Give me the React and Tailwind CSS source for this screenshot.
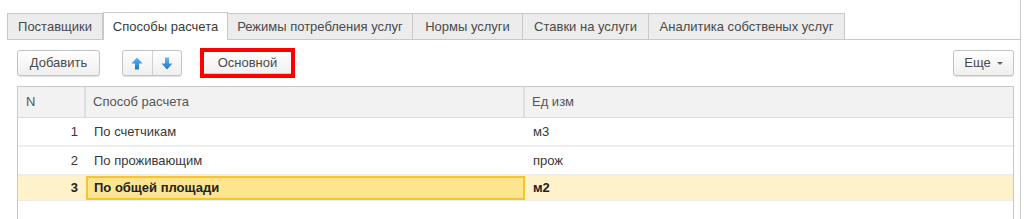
import React from "react"

const tabs = [
  { name: "Поставщики", w: "w-[96px]" },
  { name: "Способы расчета", w: "w-[125px]", active: true },
  { name: "Режимы потребления услуг", w: "w-[186px]" },
  { name: "Нормы услуги", w: "w-[111px]" },
  { name: "Ставки на услуги", w: "w-[127px]" },
  { name: "Аналитика собственых услуг", w: "w-[197px]" },
]

const rows = [
  { n: 1, name: "По счетчикам", unit: "м3" },
  { n: 2, name: "По проживающим", unit: "прож" },
  { n: 3, name: "По общей площади", unit: "м2", selected: true },
]

const btn = "h-[26px] bg-gradient-to-b from-white to-[#efefef] border border-[#c3c3c3] rounded-[3px] shadow-[0_1px_1px_rgba(0,0,0,0.12)] text-[#4a4a4a] flex items-center justify-center"

const Arrow = ({ down }) => (
  <svg width="12" height="13" viewBox="0 0 12 13" className={down ? "rotate-180" : ""}>
    <defs>
      <linearGradient id={down ? "gd" : "gu"} x1="0" y1="0" x2="0" y2="1">
        <stop offset="0" stopColor={down ? "#1f6fc0" : "#5fb4ef"} />
        <stop offset="1" stopColor={down ? "#6ab8ee" : "#1f74c8"} />
      </linearGradient>
    </defs>
    <path d="M6 0.5 L11.5 6.5 L8 6.5 L8 12.5 L4 12.5 L4 6.5 L0.5 6.5 Z" fill={`url(#${down ? "gd" : "gu"})`} />
  </svg>
)

export default function App() {
  return (
    <div className="w-[1024px] h-[219px] bg-white overflow-hidden font-['Liberation_Sans',Arial,sans-serif] text-[13px] text-[#4a4a4a]">
      <div className="ml-[7px] w-[1014px] pt-3 border-r border-[#c8c8c8] h-full">
        {/* tabs */}
        <div className="flex items-end h-[28px]">
          {tabs.map(t => (
            <div
              key={t.name}
              className={t.active
                ? `${t.w} h-[28px] bg-white border border-b-0 border-[#c8c8c8] flex items-center justify-center text-[#3a3a3a]`
                : `${t.w} h-[27px] bg-[#ececec] border border-[#c8c8c8] -ml-px first:ml-0 flex items-center justify-center text-[#4a4a4a]`}
            >
              {t.name}
            </div>
          ))}
          <div className="flex-1 border-b border-[#c8c8c8] h-full" />
        </div>

        <div className="pl-[10px] pr-[6px]">
          {/* toolbar */}
          <div className="flex items-center mt-[8px] h-[30px]">
            <div className={`${btn} w-[83px]`}>Добавить</div>
            <div className={`${btn} w-[60px] ml-[22px] !justify-start`}>
              <div className="w-[30px] h-full flex items-center justify-center border-r border-[#d0d0d0]"><Arrow /></div>
              <div className="w-[29px] h-full flex items-center justify-center"><Arrow down /></div>
            </div>
            <div className="ml-[18px] w-[95px] h-[30px] border-[4px] border-[#ff0000] flex items-center">
              <div className="w-[87px] h-[22px] bg-gradient-to-b from-white to-[#f0f0f0] border-b border-[#cfcfcf] flex items-center justify-center text-[#4a4a4a]">Основной</div>
            </div>
            <div className={`${btn} w-[61px] h-[25px] ml-auto gap-[6px]`}>
              <span>Еще</span>
              <span className="w-0 h-0 border-l-[3px] border-r-[3px] border-t-[3px] border-l-transparent border-r-transparent border-t-[#666] mt-px" />
            </div>
          </div>

          {/* table */}
          <div className="mt-[8px] border-l border-t border-r border-[#c8c8c8] h-[200px]">
            <div className="flex h-[31px] bg-[#f2f2f2] border-b border-[#dcdcdc] text-[#555]">
              <div className="w-[68px] border-r-2 border-[#dedede] pl-[8px] flex items-center">N</div>
              <div className="w-[439px] border-r-2 border-[#dedede] pl-[7px] flex items-center">Способ расчета</div>
              <div className="flex-1 pl-[7px] flex items-center">Ед изм</div>
            </div>
            {rows.map(r => (
              <div
                key={r.n}
                className={r.selected
                  ? "flex h-[25px] bg-[#fdf2c9] border-b border-[#ececec] font-bold text-[#222]"
                  : "flex h-[29px] border-b-2 border-[#ededed] text-[#383838]"}
              >
                <div className="w-[68px] pr-[8px] flex items-center justify-end">{r.n}</div>
                <div className={r.selected
                  ? "w-[439px] bg-[#fde48f] border-2 border-[#f6c42e] pl-[6px] flex items-center"
                  : "w-[439px] pl-[8px] flex items-center"}>{r.name}</div>
                <div className="flex-1 pl-[8px] flex items-center">{r.unit}</div>
              </div>
            ))}
          </div>
        </div>
      </div>
    </div>
  )
}
